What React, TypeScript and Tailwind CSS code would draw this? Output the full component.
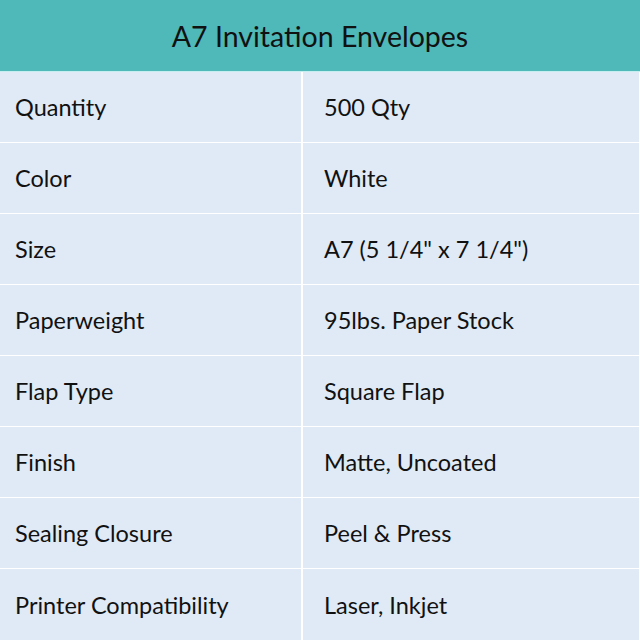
import React from "react";

const rows: [string, string][] = [
  ["Quantity", "500 Qty"],
  ["Color", "White"],
  ["Size", 'A7 (5 1/4" x 7 1/4")'],
  ["Paperweight", "95lbs. Paper Stock"],
  ["Flap Type", "Square Flap"],
  ["Finish", "Matte, Uncoated"],
  ["Sealing Closure", "Peel & Press"],
  ["Printer Compatibility", "Laser, Inkjet"],
];

export default function App() {
  return (
    <div
      className="w-[640px] h-[640px] bg-white flex flex-col text-[#111111]"
      style={{ fontFamily: "Lato, 'Open Sans', sans-serif" }}
    >
      <div className="h-[72px] shrink-0 bg-[#4fb8b9] flex items-center justify-center text-[28.5px] pt-[2px] border-b border-[#c5eef0]">
        A7 Invitation Envelopes
      </div>
      {rows.map(([k, v], i) => (
        <div
          key={k}
          className={`flex h-[71px] shrink-0 ${i < rows.length - 1 ? "border-b" : ""} border-white pr-[1px]`}
        >
          <div className="w-[303px] bg-[#dfeaf6] flex items-center pl-[15px] pt-[2px] text-[23.5px] border-r-2 border-white">
            {k}
          </div>
          <div className="flex-1 bg-[#dfeaf6] flex items-center pl-[21px] pt-[2px] text-[23.5px]">
            {v}
          </div>
        </div>
      ))}
    </div>
  );
}
